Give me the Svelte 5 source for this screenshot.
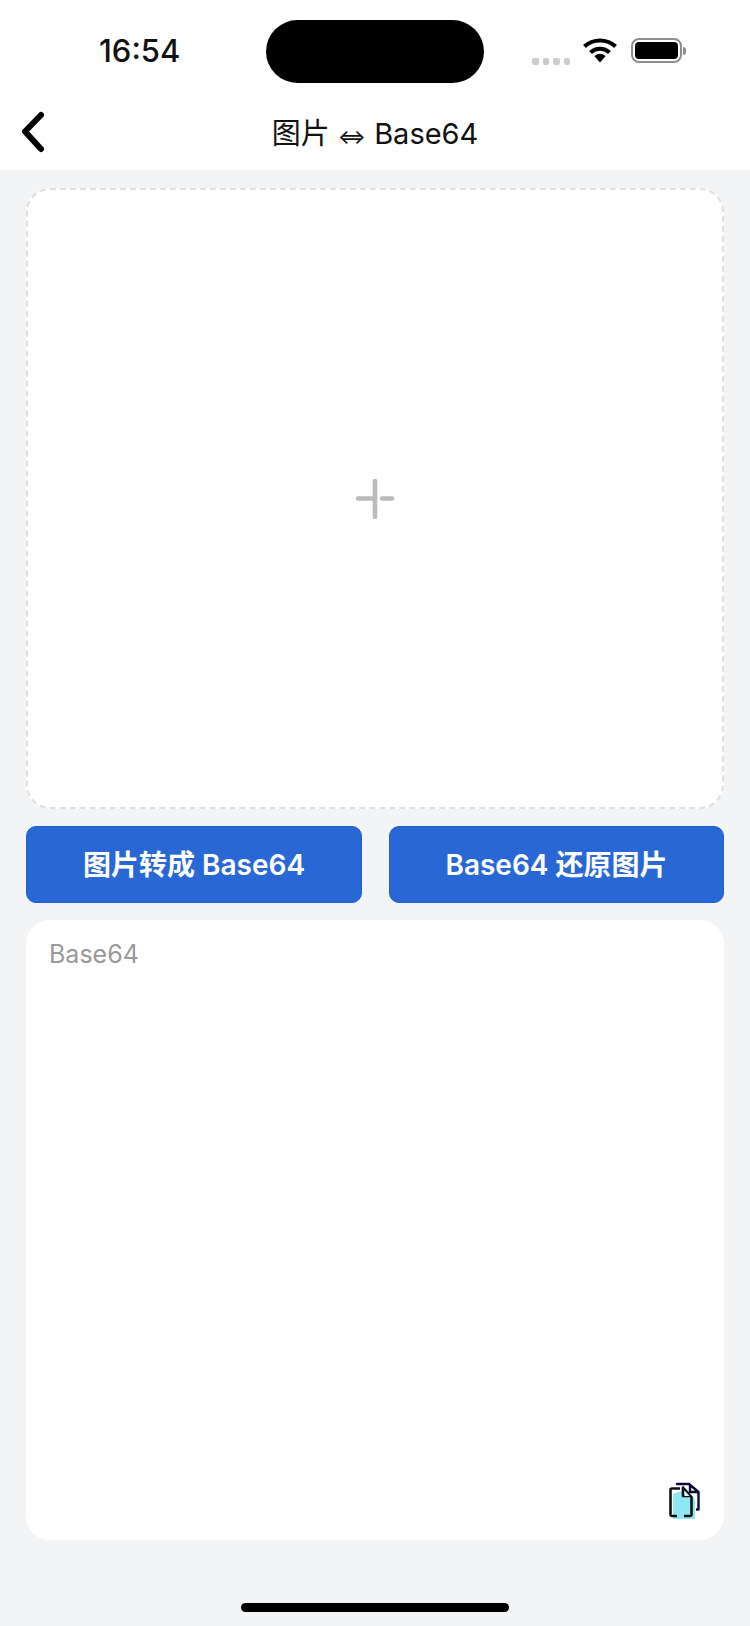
<script>
  let base64 = $state("");
</script>

<div class="page">
  <div class="status">
    <span class="time">16:54</span>
    <div class="island"></div>
    <div class="indicators">
      <div class="dots"><i></i><i></i><i></i><i></i></div>
      <svg class="wifi" width="34" height="25" viewBox="0 0 34 25">
        <path d="M1.5 8.5C10 .5 24 .5 32.5 8.5" fill="none" stroke="#000" stroke-width="4.2" />
        <path d="M7.5 14.5C13 9.5 21 9.5 26.5 14.5" fill="none" stroke="#000" stroke-width="4.2" />
        <path d="M11.5 18.2C15 15 19 15 22.5 18.2L17 24.5Z" fill="#000" />
      </svg>
      <div class="battery"><div class="level"></div></div>
      <div class="cap"></div>
    </div>
  </div>

  <header class="nav">
    <svg class="back" width="30" height="42" viewBox="0 0 30 42">
      <path d="M23 4 7 20.5 23 38" fill="none" stroke="#000" stroke-width="6" stroke-linecap="round" stroke-linejoin="round" />
    </svg>
    <h1>图片 <span class="arrow">⇔</span> Base64</h1>
  </header>

  <main>
    <div class="drop">
      <svg width="40" height="40" viewBox="0 0 40 40">
        <path d="M3 19.5H18M27 19.5H37M20 2V38" fill="none" stroke="#bbb" stroke-width="4.5" stroke-linecap="round" />
      </svg>
    </div>

    <div class="actions">
      <button type="button" class="left">图片转成 Base64</button>
      <button type="button">Base64 还原图片</button>
    </div>

    <div class="output">
      <textarea bind:value={base64} placeholder="Base64"></textarea>
      <svg class="copy" width="40" height="44" viewBox="0 0 40 44">
        <path d="M8 16 19 12 30 21V41H8Z" fill="#8fe6f5" />
        <path d="M12 7V6H24L33.5 14V31.5H31M33 14H25V7" fill="none" stroke="#0b0b33" stroke-width="2.4" stroke-linejoin="round" />
        <path d="M15 10.5H7Q5.5 10.5 5.5 12V36.5Q5.5 38 7 38H12M19 38H25Q26.5 38 26.5 36.5V19L18 9.5V18H26" fill="none" stroke="#111" stroke-width="2.6" stroke-linejoin="round" />
        <path d="M19.5 12.5 24.5 18H19.5Z" fill="#dff3f8" />
      </svg>
    </div>
  </main>

  <div class="home"><div class="bar"></div></div>
</div>

<style>
  :global(body) {
    background: #f3f4f6;
    font-family: Inter, "Noto Sans CJK SC", sans-serif;
  }

  .page {
    width: 750px;
    height: 1626px;
    display: flex;
    flex-direction: column;
    background: #f3f4f6;
    overflow: hidden;
  }

  .status {
    height: 97px;
    box-sizing: border-box;
    padding-top: 20px;
    background: #fff;
    display: flex;
    align-items: flex-start;
  }

  .time {
    width: 266px;
    box-sizing: border-box;
    padding: 13px 0 0 99px;
    font-size: 31px;
    line-height: 36px;
    font-weight: 500;
    color: #111;
  }

  .island {
    width: 218px;
    height: 63px;
    border-radius: 32px;
    background: #000;
  }

  .indicators {
    display: flex;
    align-items: center;
    padding: 23px 0 0 48px;
  }

  .dots {
    display: flex;
    gap: 4px;
    margin: 15px 13px 0 0;
  }

  .dots i {
    width: 6.5px;
    height: 6.5px;
    border-radius: 2px;
    background: #ccc;
  }

  .wifi {
    margin: -6px 14px 0 0;
  }

  .battery {
    width: 51px;
    height: 25px;
    box-sizing: border-box;
    border: 2px solid #8e8e8e;
    border-radius: 8px;
    padding: 2px;
    margin-top: -6px;
  }

  .level {
    height: 100%;
    border-radius: 4px;
    background: #000;
  }

  .cap {
    width: 3px;
    height: 8px;
    margin: -6px 0 0 1px;
    border-radius: 0 3px 3px 0;
    background: #8e8e8e;
  }

  .nav {
    height: 73px;
    background: #fff;
    display: flex;
    align-items: center;
    justify-content: center;
    position: relative;
  }

  .back {
    position: absolute;
    left: 18px;
    top: 14px;
  }

  h1 {
    margin: 4px 0 0;
    font-size: 29px;
    line-height: 40px;
    font-weight: 400;
    color: #111;
  }

  .arrow {
    font-size: 21px;
  }

  main {
    flex: 1;
    padding: 18px 26px 0;
    display: flex;
    flex-direction: column;
    gap: 17px;
  }

  .drop {
    height: 621px;
    box-sizing: border-box;
    border: 2px dashed #e0e0e0;
    border-radius: 24px;
    background: #fff;
    display: flex;
    align-items: center;
    justify-content: center;
  }

  .actions {
    display: flex;
    justify-content: space-between;
  }

  button {
    width: 335px;
    height: 77px;
    padding: 0 0 4px;
    border: 1px solid #1b5fd2;
    border-radius: 10px;
    background: #2968d4;
    color: #fff;
    font: 600 28px Inter, "Noto Sans CJK SC", sans-serif;
  }

  button.left {
    width: 336px;
  }

  .output {
    height: 620px;
    position: relative;
    border-radius: 24px;
    background: #fff;
  }

  textarea {
    display: block;
    width: 100%;
    height: 100%;
    box-sizing: border-box;
    padding: 19px 23px;
    border: none;
    outline: none;
    resize: none;
    background: transparent;
    font: 400 25px/30px Inter, "Noto Sans CJK SC", sans-serif;
    color: #111;
  }

  textarea::placeholder {
    color: #999;
    opacity: 1;
  }

  .copy {
    position: absolute;
    right: 19px;
    bottom: 18px;
  }

  .home {
    height: 85px;
    display: flex;
    justify-content: center;
  }

  .bar {
    width: 268px;
    height: 9px;
    margin-top: 62px;
    border-radius: 5px;
    background: #000;
  }
</style>
